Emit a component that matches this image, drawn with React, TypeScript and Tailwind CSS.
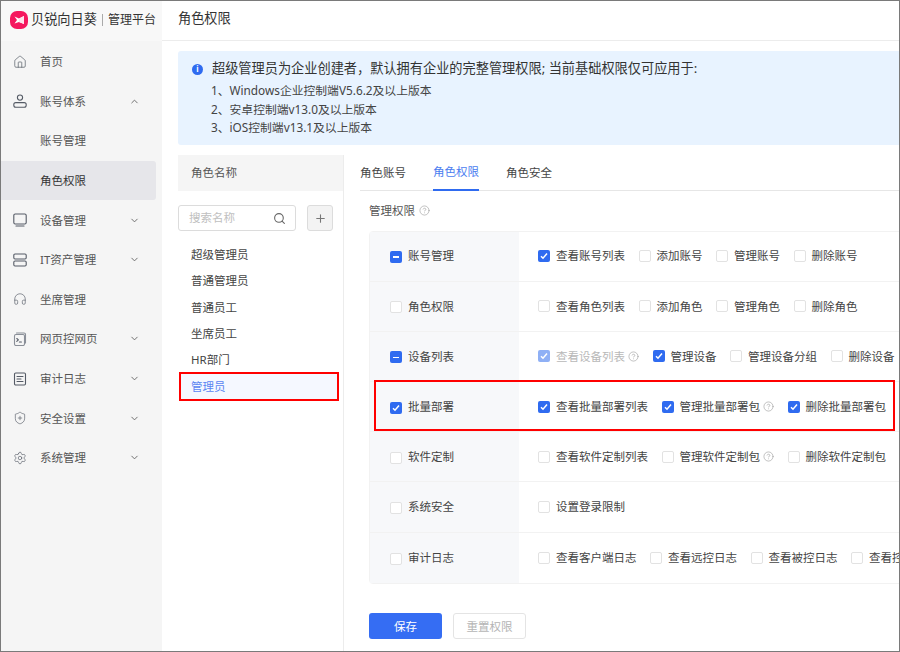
import React from "react";
import { Home, ChevronUp, ChevronDown, Search, Plus, Settings, Headphones, ShieldPlus, CircleHelp } from "lucide-react";

const font = { fontFamily: '"Noto Sans","Noto Sans CJK SC",sans-serif' };

function IconWrap({ children }: { children: React.ReactNode }) {
  return (
    <svg width="14" height="14" viewBox="0 0 14 14" fill="none" stroke="#555b66" strokeWidth="1.1" strokeLinecap="round" strokeLinejoin="round">
      {children}
    </svg>
  );
}

const UserIcon = () => (
  <IconWrap>
    <circle cx="7" cy="3.6" r="2.6" />
    <rect x="0.8" y="8.6" width="12.4" height="4.6" rx="2" />
  </IconWrap>
);
const MonitorIcon = () => (
  <IconWrap>
    <rect x="0.8" y="1" width="12.4" height="10" rx="1.4" />
    <path d="M3 13h8" />
  </IconWrap>
);
const ServerIcon = () => (
  <IconWrap>
    <rect x="0.8" y="1" width="12.4" height="5" rx="1.2" />
    <rect x="0.8" y="8" width="12.4" height="5" rx="1.2" />
  </IconWrap>
);
const WebIcon = () => (
  <IconWrap>
    <rect x="1.5" y="2.5" width="10" height="11" rx="1.4" stroke="#8a8f98" />
    <path d="M3.5 1h7.5a1.5 1.5 0 0 1 1.5 1.5V11" stroke="#8a8f98" />
    <path d="M3.8 6.5l1.6 1.4-1.6 1.4M6.4 10h2" />
  </IconWrap>
);
const LogIcon = () => (
  <IconWrap>
    <rect x="1.5" y="1" width="11" height="12" rx="1.2" />
    <path d="M4 4.5h6M4 7h4M4 9.5h6" />
  </IconWrap>
);

type NavItem = { label: string; icon?: React.ReactNode; chevron?: "up" | "down"; active?: boolean };

const nav: NavItem[] = [
  { label: "首页", icon: <Home size={14} strokeWidth={1.2} color="#555b66" /> },
  { label: "账号体系", icon: <UserIcon />, chevron: "up" },
  { label: "账号管理" },
  { label: "角色权限", active: true },
  { label: "设备管理", icon: <MonitorIcon />, chevron: "down" },
  { label: "IT资产管理", icon: <ServerIcon />, chevron: "down" },
  { label: "坐席管理", icon: <Headphones size={14} strokeWidth={1.1} color="#555b66" /> },
  { label: "网页控网页", icon: <WebIcon />, chevron: "down" },
  { label: "审计日志", icon: <LogIcon />, chevron: "down" },
  { label: "安全设置", icon: <ShieldPlus size={14} strokeWidth={1.1} color="#555b66" />, chevron: "down" },
  { label: "系统管理", icon: <Settings size={14} strokeWidth={1.1} color="#555b66" />, chevron: "down" },
];

function Box({ state }: { state: "on" | "off" | "mixed" | "disabled" }) {
  if (state === "off") {
    return <span className="w-[12px] h-[12px] shrink-0 rounded-[2px] border border-[#e2e2e2] bg-white" />;
  }
  return (
    <span className={`w-[12px] h-[12px] shrink-0 rounded-[2px] flex items-center justify-center ${state === "disabled" ? "bg-[#8fb0f5]" : "bg-[#2f6bf0]"}`}>
      {state === "mixed" ? (
        <span className="w-[6px] h-[1.5px] bg-white" />
      ) : (
        <svg width="8" height="8" viewBox="0 0 8 8" fill="none" stroke="white" strokeWidth="1.5">
          <path d="M1 4.2l2 2L7 1.6" />
        </svg>
      )}
    </span>
  );
}

const Help = () => <CircleHelp size={11} strokeWidth={1.3} color="#9a9a9a" className="shrink-0" />;

type Perm = { label: string; state: "on" | "off" | "disabled"; help?: boolean };

function PermCell({ p }: { p: Perm }) {
  return (
    <span className="flex items-center gap-[6px] shrink-0">
      <Box state={p.state} />
      <span className={`flex items-center gap-[3px] ${p.state === "disabled" ? "text-[#b8b8b8]" : "text-[#444]"}`}>
        {p.label}
        {p.help && <Help />}
      </span>
    </span>
  );
}

const off = (label: string, help?: boolean): Perm => ({ label, state: "off", help });
const on = (label: string, help?: boolean): Perm => ({ label, state: "on", help });

const rows: { name: string; state: "on" | "off" | "mixed"; perms: Perm[]; marked?: boolean }[] = [
  { name: "账号管理", state: "mixed", perms: [on("查看账号列表"), off("添加账号"), off("管理账号"), off("删除账号")] },
  { name: "角色权限", state: "off", perms: [off("查看角色列表"), off("添加角色"), off("管理角色"), off("删除角色")] },
  { name: "设备列表", state: "mixed", perms: [{ label: "查看设备列表", state: "disabled", help: true }, on("管理设备"), off("管理设备分组"), off("删除设备")] },
  { name: "批量部署", state: "on", marked: true, perms: [on("查看批量部署列表"), on("管理批量部署包", true), on("删除批量部署包")] },
  { name: "软件定制", state: "off", perms: [off("查看软件定制列表"), off("管理软件定制包", true), off("删除软件定制包")] },
  { name: "系统安全", state: "off", perms: [off("设置登录限制")] },
  { name: "审计日志", state: "off", perms: [off("查看客户端日志"), off("查看远控日志"), off("查看被控日志"), off("查看控制日志")] },
];

const roles = ["超级管理员", "普通管理员", "普通员工", "坐席员工", "HR部门", "管理员"];

export default function App() {
  return (
    <div style={font} className="relative w-[900px] h-[652px] overflow-hidden flex bg-white border border-[#7a7a7a] text-[11.5px] text-[#444]">
      <aside className="w-[161px] shrink-0 bg-[#f5f5f5] flex flex-col">
        <div className="h-[40px] shrink-0 bg-[#f8f8f8] flex items-center pl-[9px] pb-[3px]">
          <svg width="18" height="18" viewBox="0 0 18 18" className="shrink-0">
            <rect width="18" height="18" rx="7" fill="#f5185f" />
            <path d="M4.5 5.5L9 7.5 14 5v8l-5-2-4.5 1.5L7 9z" fill="white" />
            <path d="M9 7.5L14 5v8l-5-2z" fill="#ffe3ec" />
          </svg>
          <span className="ml-[3px] text-[13.2px] text-[#333] whitespace-nowrap">贝锐向日葵</span>
          <span className="mx-[5px] w-px h-[12px] bg-[#aaa]" />
          <span className="text-[12px] text-[#333] whitespace-nowrap">管理平台</span>
        </div>
        <nav className="flex flex-col pt-[1px]">
          {nav.map((n) => (
            <div key={n.label} className={`h-[39.6px] w-[155px] flex items-center rounded-r-[3px] ${n.active ? "bg-[#e6e6ea] text-[#333]" : "text-[#555]"}`}>
              <span className="w-[39px] pl-[12px] flex items-center shrink-0">{n.icon}</span>
              <span className="flex-1 whitespace-nowrap">{n.label}</span>
              {n.chevron === "up" && <ChevronUp size={11} color="#666" className="mr-[16px]" />}
              {n.chevron === "down" && <ChevronDown size={11} color="#666" className="mr-[16px]" />}
            </div>
          ))}
        </nav>
      </aside>

      <main className="flex-1 min-w-0 flex flex-col">
        <header className="h-[40px] shrink-0 border-b border-[#ececec] flex items-center pl-[16px] pb-[4px] text-[13.2px] text-[#333]">角色权限</header>

        <div className="mt-[10px] ml-[16px] h-[94px] shrink-0 w-[800px] rounded-[3px] bg-[#e8f3ff] pl-[14px] pt-[9px] text-[#444]">
          <div className="flex items-center gap-[9px] h-[18px] text-[13.2px] text-[#333] whitespace-nowrap">
            <span className="w-[11px] h-[11px] rounded-full bg-[#2f6bf0] text-white flex items-center justify-center text-[8px] font-bold leading-none">i</span>
            超级管理员为企业创建者，默认拥有企业的完整管理权限; 当前基础权限仅可应用于:
          </div>
          <div className="pl-[19px] mt-[3px] text-[11.8px] leading-[18.7px] whitespace-nowrap">
            <div>1、Windows企业控制端V5.6.2及以上版本</div>
            <div>2、安卓控制端v13.0及以上版本</div>
            <div>3、iOS控制端v13.1及以上版本</div>
          </div>
        </div>

        <div className="mt-[10px] flex flex-1 min-h-0">
          <section className="w-[166px] shrink-0 ml-[16px] border-r border-[#ececec]">
            <div className="h-[36px] bg-[#f5f5f5] flex items-center pl-[13px] text-[#555]">角色名称</div>
            <div className="mt-[14px] flex gap-[11px]">
              <div className="w-[118px] h-[26px] rounded-[3px] border border-[#dcdcdc] flex items-center justify-between pl-[10px] pr-[9px] text-[#c0c0c0]">
                搜索名称
                <Search size={13} color="#666" />
              </div>
              <div className="w-[26px] h-[26px] rounded-[3px] border border-[#dcdcdc] bg-[#f3f3f3] flex items-center justify-center">
                <Plus size={13} color="#777" />
              </div>
            </div>
            <ul className="mt-[10.5px] mr-[4px] ml-[1px]">
              {roles.map((r, i) => {
                const active = i === 5;
                return (
                  <li key={r} className={`relative h-[26.3px] flex items-center pl-[12px] ${active ? "bg-[#f5f8ff] text-[#5b86f2]" : "text-[#444]"}`}>
                    {r}
                    {active && <span className="absolute inset-x-0 -top-px -bottom-[2px] border-2 border-[#f00] pointer-events-none" />}
                  </li>
                );
              })}
            </ul>
          </section>

          <section className="flex-1 min-w-0 pl-[16px]">
            <div className="h-[36px] flex gap-[27px] border-b border-[#e6e6e6] text-[#444]">
              {["角色账号", "角色权限", "角色安全"].map((t, i) => (
                <span key={t} className={`h-[36px] flex items-center ${i === 1 ? "text-[#4a7cf0] border-b-2 border-[#2f6bf0]" : ""}`}>{t}</span>
              ))}
            </div>
            <div className="h-[39.5px] pl-[9px] flex items-center gap-[4px] text-[#555]">
              管理权限
              <Help />
            </div>
            <div className="ml-[9px] w-[560px] rounded-[4px] border border-[#f2f2f2]">
              {rows.map((r) => (
                <div key={r.name} className="relative h-[50.2px] flex border-b border-[#f2f2f2] last:border-b-0">
                  <div className="w-[149px] shrink-0 bg-[#f7f8fa] flex items-center pl-[20px] gap-[6px] text-[#444]">
                    <span className="translate-y-px flex"><Box state={r.state} /></span>
                    {r.name}
                  </div>
                  <div className="flex-1 flex items-center pl-[19px] gap-[13.5px] whitespace-nowrap">
                    {r.perms.map((p) => <PermCell key={p.label} p={p} />)}
                  </div>
                  {r.marked && <span className="absolute left-[4px] -top-[2px] w-[521px] h-[51px] border-2 border-[#f00] pointer-events-none" />}
                </div>
              ))}
            </div>
            <div className="mt-[29.5px] ml-[9px] flex gap-[11px]">
              <div className="w-[73px] h-[26px] rounded-[3px] bg-[#356df3] text-white flex items-center justify-center">保存</div>
              <div className="w-[73px] h-[26px] rounded-[3px] border border-[#e4e4e4] text-[#b5b5b5] flex items-center justify-center">重置权限</div>
            </div>
          </section>
        </div>
      </main>
    </div>
  );
}
